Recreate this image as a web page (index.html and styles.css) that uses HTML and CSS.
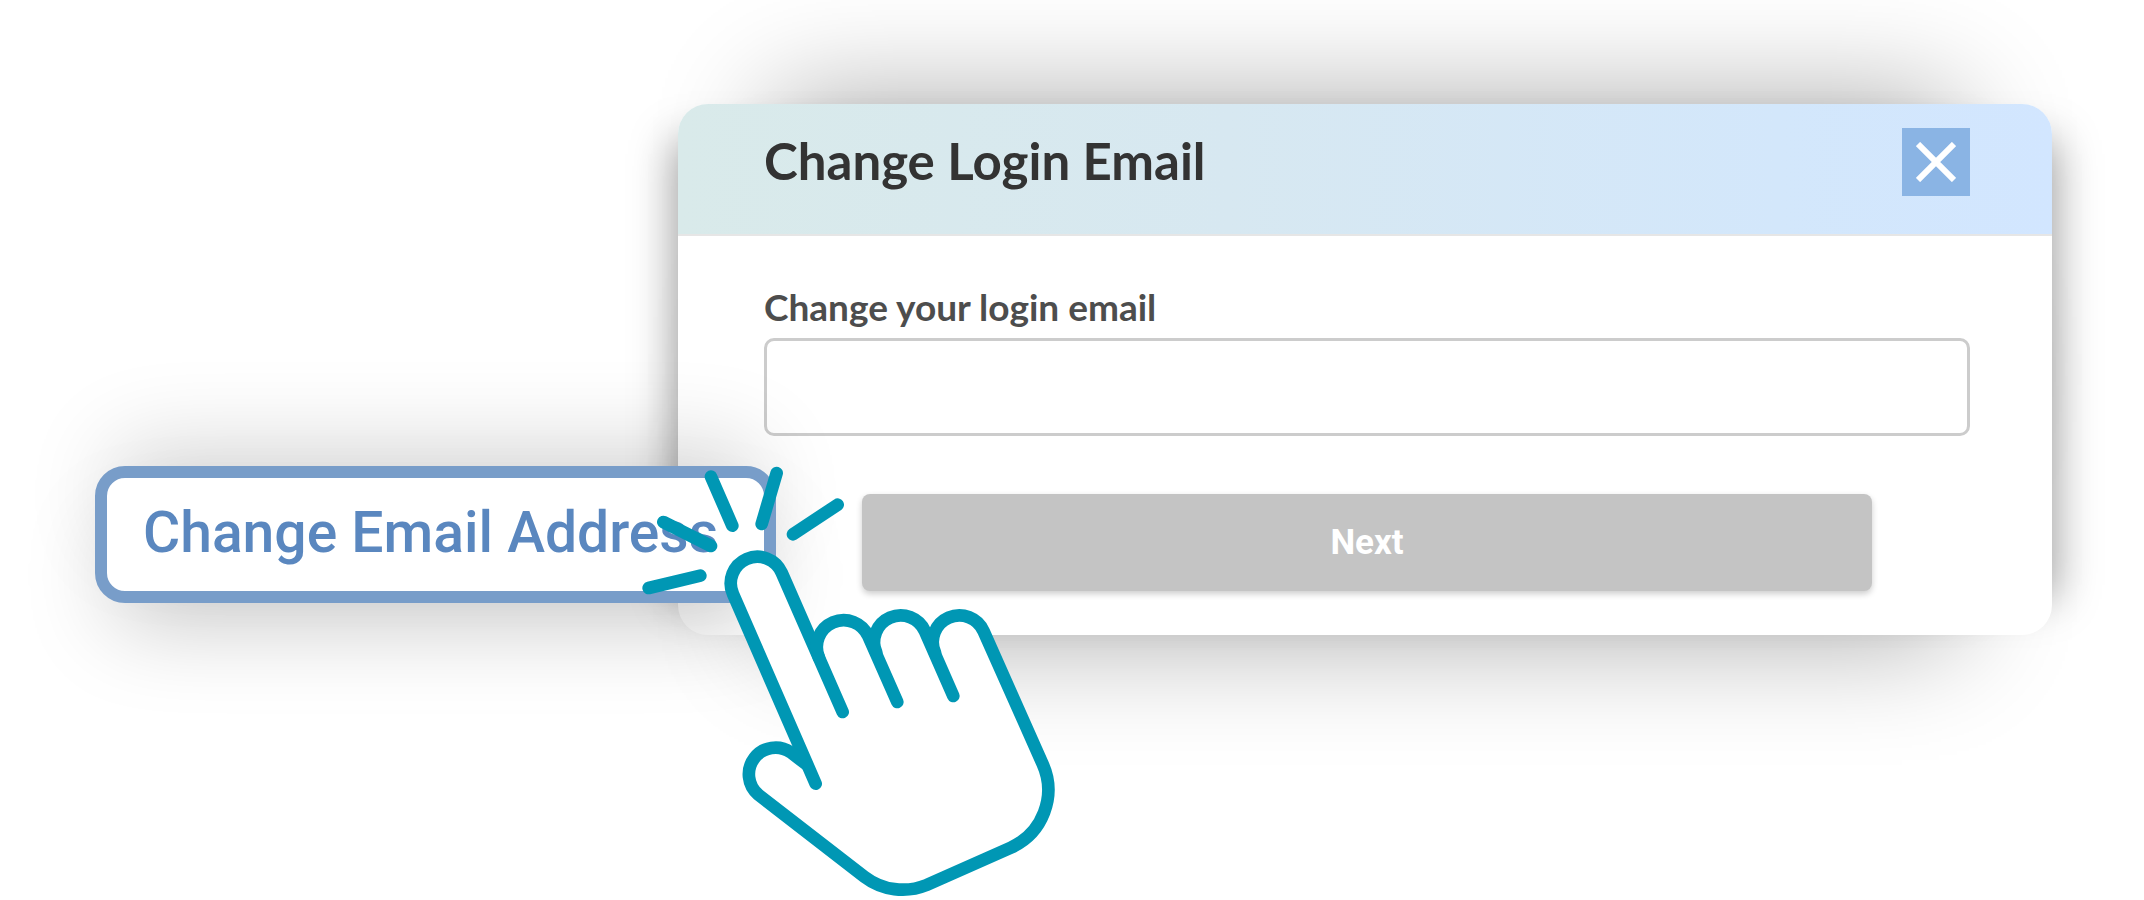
FILE: index.html
```
<!DOCTYPE html>
<html lang="en">
<head>
<meta charset="utf-8">
<title>Change Login Email</title>
<link rel="stylesheet" href="styles.css">
</head>
<body>
<main class="scene">
  <form class="dialog">
    <div class="dialog-header">
      <h1>Change Login Email</h1>
      <button type="button" class="close" aria-label="Close">
        <svg viewBox="0 0 40 40"><path d="M2 2L38 38M38 2L2 38"/></svg>
      </button>
    </div>
    <div class="dialog-body">
      <label for="email">Change your login email</label>
      <input id="email" type="email" name="email">
      <button type="button" class="next">Next</button>
    </div>
  </form>
  <button type="button" class="callout">Change Email Address</button>
  <svg class="hand" viewBox="0 0 1380 1380" aria-hidden="true">
    <!-- palm and fingers -->
    <path class="fill" d="M587 1031L339 462A79 79 0 0 1 485 398L597 653A80 80 0 0 1 745 589L769 638A79 79 0 0 1 915 574L946 638A79 79 0 0 1 1091 574L1268 972A190 190 0 0 1 1172 1223L920 1335A190 190 0 0 1 733 1310L415 1064A80 80 0 0 1 512 937L558 972Z"/>
    <path d="M587 1031L339 462A79 79 0 0 1 485 398L668 816"/>
    <path d="M597 653A80 80 0 0 1 745 589L832 786"/>
    <path d="M769 638A79 79 0 0 1 915 574L1000 768"/>
    <path d="M945 638A79 79 0 0 1 1091 574L1268 972A190 190 0 0 1 1172 1223L920 1335A190 190 0 0 1 733 1310L415 1064A80 80 0 0 1 512 937L558 972"/>
    <!-- click rays -->
    <path d="M86 444L241 407M130 246L273 318M273 110L337 257M470 99L425 252M653 194L519 283"/>
  </svg>
</main>
</body>
</html>
```
FILE: styles.css
```
* {
  box-sizing: border-box;
}
body {
  margin: 0;
  font-family: Lato, sans-serif;
  background-color: white;
}
.scene {
  position: relative;
  min-height: 100vh;
  padding: 104px 92px 0 678px;
  overflow: hidden;
}
.dialog {
  border-radius: 30px;
  background-color: white;
  box-shadow: 0 -100px 110px -95px rgba(0, 0, 0, 0.33), 0 100px 110px -95px rgba(0, 0, 0, 0.33), 40px 0 40px -36px rgba(0, 0, 0, 0.36), -40px 0 40px -36px rgba(0, 0, 0, 0.36);
}
.dialog-header {
  display: flex;
  justify-content: space-between;
  align-items: flex-start;
  height: 132px;
  padding: 24px 82px 0 86px;
  border-bottom: 2px solid #e6e6e6;
  border-radius: 30px 30px 0 0;
  background: linear-gradient(90deg, #d9eaea, #d7e8f1 40%, #d3e7fb 80%, #d2e6ff);
}
h1 {
  margin: 0;
  font-size: 51px;
  line-height: 66px;
  color: #333;
}
.close {
  width: 68px;
  height: 68px;
  padding: 14px;
  border: none;
  background-color: #8ab4e4;
}
.close svg {
  display: block;
  fill: none;
  stroke: white;
  stroke-width: 6px;
}
.dialog-body {
  display: flex;
  flex-direction: column;
  padding: 48px 82px 44px 86px;
}
label {
  font-size: 37px;
  font-weight: bold;
  line-height: 46px;
  color: #4d4d4d;
}
input {
  height: 98px;
  margin-top: 8px;
  padding: 0 24px;
  border: 3px solid #ccc;
  border-radius: 10px;
  font: 36px Lato, sans-serif;
}
.next {
  height: 97px;
  margin: 58px 98px 0;
  border: none;
  border-radius: 8px;
  font: bold 35px Roboto, sans-serif;
  color: white;
  background-color: #c4c4c4;
  box-shadow: 0 3px 6px rgba(0, 0, 0, 0.2);
}
.callout {
  position: absolute;
  top: 466px;
  left: 95px;
  padding: 23px 46px 27px 36px;
  border: 12px solid #789dc9;
  border-radius: 30px;
  font: 500 57px/63px Roboto, sans-serif;
  color: #5a87bf;
  background-color: white;
  box-shadow: 0 -40px 90px -20px rgba(0, 0, 0, 0.16), 0 40px 90px -20px rgba(0, 0, 0, 0.22);
}
.hand {
  position: absolute;
  top: 440px;
  left: 620px;
  width: 460px;
  fill: none;
  stroke: #0097b4;
  stroke-width: 38px;
  stroke-linecap: round;
}
.hand .fill {
  fill: white;
  stroke: none;
}
```
